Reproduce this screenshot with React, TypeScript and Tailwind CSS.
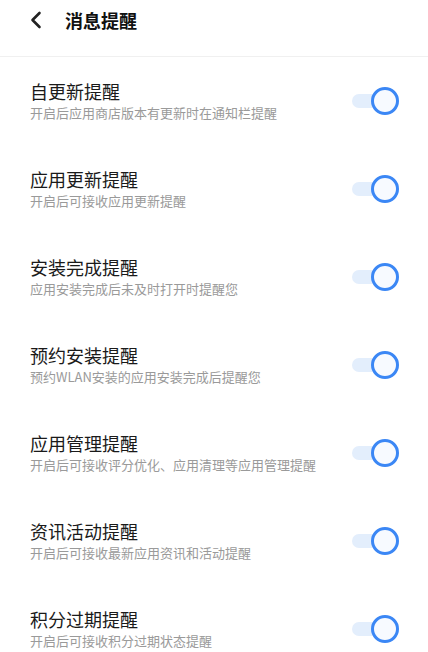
const items = [
  { title: "自更新提醒", desc: "开启后应用商店版本有更新时在通知栏提醒" },
  { title: "应用更新提醒", desc: "开启后可接收应用更新提醒" },
  { title: "安装完成提醒", desc: "应用安装完成后未及时打开时提醒您" },
  { title: "预约安装提醒", desc: "预约WLAN安装的应用安装完成后提醒您" },
  { title: "应用管理提醒", desc: "开启后可接收评分优化、应用清理等应用管理提醒" },
  { title: "资讯活动提醒", desc: "开启后可接收最新应用资讯和活动提醒" },
  { title: "积分过期提醒", desc: "开启后可接收积分过期状态提醒" },
];

function Toggle() {
  return (
    <div className="relative w-[47px] h-[28px] shrink-0">
      <div className="absolute left-0 top-[7px] h-[14px] w-[40px] rounded-full bg-[#e3eefc]" />
      <div className="absolute right-0 top-0 h-[28px] w-[28px] rounded-full border-[3px] border-[#3b87f5] bg-[#f7faff]" />
    </div>
  );
}

export default function App() {
  return (
    <main
      className="w-[428px] h-[652px] bg-white overflow-hidden"
      style={{ fontFamily: '"Noto Sans CJK SC", "Noto Sans", sans-serif' }}
    >
      <header className="h-[57px] border-b border-[#f0f0f0]">
        <div className="h-10 flex items-center pl-[29px] gap-[22px]">
          <svg width="14" height="18" viewBox="0 0 14 18" fill="none">
            <path d="M10.5 2 L3.5 9 L10.5 16" stroke="#222" strokeWidth="2.6" strokeLinecap="round" strokeLinejoin="round" />
          </svg>
          <h1 className="text-[18px] font-bold text-[#111] leading-none">消息提醒</h1>
        </div>
      </header>

      <div className="flex flex-col">
        {items.map((it) => (
          <div key={it.title} className="h-[88px] flex items-center justify-between pl-[30px] pr-[29px]">
            <div className="flex flex-col">
              <span className="text-[18px] leading-[20px] text-[#1a1a1a]">{it.title}</span>
              <span className="mt-[4px] text-[13px] leading-[16px] text-[#9a9a9a]">{it.desc}</span>
            </div>
            <Toggle />
          </div>
        ))}
      </div>
    </main>
  );
}
